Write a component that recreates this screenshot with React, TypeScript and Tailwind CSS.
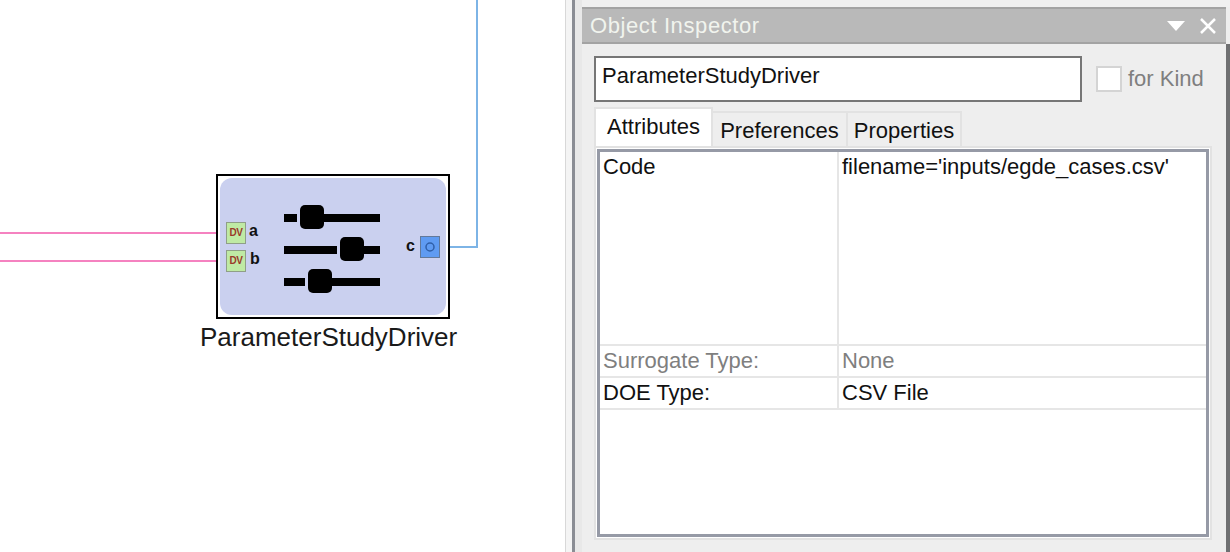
const sans = "font-['Liberation_Sans',Arial,sans-serif]";

function Slider({ left, mid }: { left: number; mid: number }) {
  return null;
}

function SliderIcon() {
  return (
    <svg width="98" height="92" viewBox="0 0 98 92" className="absolute left-[283px] top-[204px]">
      <g fill="#000">
        <rect x="1" y="10" width="13" height="8" />
        <rect x="30" y="10" width="67" height="8" />
        <rect x="17" y="1" width="24" height="24" rx="5" />
        <rect x="1" y="42" width="53" height="8" />
        <rect x="70" y="42" width="27" height="8" />
        <rect x="57" y="33" width="24" height="24" rx="5" />
        <rect x="1" y="74" width="21" height="8" />
        <rect x="38" y="74" width="59" height="8" />
        <rect x="25" y="65" width="24" height="24" rx="5" />
      </g>
    </svg>
  );
}

function DvPort({ top }: { top: string }) {
  return (
    <div className={`absolute left-[226px] ${top} w-[20px] h-[22px] bg-[#bfeaa4] border border-[#8f9f87] flex items-center justify-center`}>
      <span className={`${sans} text-[10px] leading-none font-bold text-[#9a3a2a] tracking-[-0.5px]`}>DV</span>
    </div>
  );
}

function Diagram() {
  return (
    <div className="relative w-[565px] h-[552px] bg-white shrink-0 overflow-hidden">
      <div className="absolute left-0 top-[232px] w-[227px] h-[2px] bg-[#f582c0]" />
      <div className="absolute left-0 top-[260px] w-[227px] h-[2px] bg-[#f582c0]" />
      <div className="absolute left-[476px] top-0 w-[2px] h-[248px] bg-[#7db4e6]" />
      <div className="absolute left-[442px] top-[246px] w-[36px] h-[2px] bg-[#7db4e6]" />
      <svg width="14" height="14" viewBox="0 0 14 14" className="absolute left-[440px] top-[240px]">
        <path d="M9 1 L2 7 L9 13 M2 7 H14" fill="none" stroke="#7db4e6" strokeWidth="1.5" />
      </svg>

      <div className="absolute left-[216px] top-[174px] w-[234px] h-[145px] border-2 border-black bg-white p-[2px]">
        <div className="w-full h-full rounded-[12px] bg-[#cad0ef]" />
      </div>
      <SliderIcon />

      <DvPort top="top-[222px]" />
      <DvPort top="top-[250px]" />
      <span className={`absolute left-[249px] top-[222px] ${sans} text-[16px] leading-[18px] font-bold text-[#111]`}>a</span>
      <span className={`absolute left-[250px] top-[250px] ${sans} text-[16px] leading-[18px] font-bold text-[#111]`}>b</span>
      <span className={`absolute left-[406px] top-[237px] ${sans} text-[16px] leading-[18px] font-bold text-[#111]`}>c</span>
      <div className="absolute left-[420px] top-[236px] w-[20px] h-[22px] bg-[#5f9bf2] border border-[#62799b] flex items-center justify-center">
        <svg width="12" height="12" viewBox="0 0 12 12">
          <circle cx="6" cy="6" r="4" fill="none" stroke="#2f5fa8" strokeWidth="1.5" />
        </svg>
      </div>

      <div className={`absolute left-[200px] top-[321px] ${sans} text-[26px] leading-[32px] text-[#1a1a1a] whitespace-nowrap`}>
        ParameterStudyDriver
      </div>
    </div>
  );
}

function Splitter() {
  return (
    <div className="flex w-[17px] h-full shrink-0 bg-[#e9e9e9]">
      <div className="w-[1px] bg-[#d8d8d8]" />
      <div className="w-[6px] bg-[#f4f4f4]" />
      <div className="w-[3px] bg-[#8a8d94]" />
      <div className="flex-1 bg-[#e8e8e8]" />
    </div>
  );
}

function Row({ label, value, muted, flex }: { label: string; value: string; muted?: boolean; flex?: boolean }) {
  const color = muted ? "text-[#7f7f7f]" : "text-[#111]";
  return (
    <div className={`flex ${flex ? "h-[194px]" : "h-[32px]"} border-b-2 border-[#e6e6e6] text-[22px] leading-[30px] ${color}`}>
      <div className="w-[239px] pl-[3px] border-r-2 border-[#e6e6e6] whitespace-nowrap">{label}</div>
      <div className="flex-1 pl-[3px] whitespace-nowrap">{value}</div>
    </div>
  );
}

function Inspector() {
  return (
    <div className={`flex-1 h-full flex flex-col bg-[#eeeeee] ${sans}`}>
      <div className="h-[7px] bg-[#f0f0f0] shrink-0" />
      <div className="flex items-center h-[37px] shrink-0 mr-[4px] bg-[#b9b9b9] border-y-2 border-[#a3a3a3] pl-[8px] pr-[10px]">
        <span className="text-[22px] leading-none text-[#f1f4ee] tracking-[0.6px]">Object Inspector</span>
        <div className="ml-auto flex items-center gap-[15px]">
          <svg width="18" height="10" viewBox="0 0 18 10">
            <path d="M0 0 H18 L9 10 Z" fill="#fff" />
          </svg>
          <svg width="16" height="16" viewBox="0 0 16 16">
            <path d="M1 1 L15 15 M15 1 L1 15" stroke="#fff" strokeWidth="2.5" />
          </svg>
        </div>
      </div>

      <div className="flex-1 min-h-0 flex flex-col bg-[#eeeeee] border-r-[4px] border-[#6f7072] pl-[12px] pr-[14px] pt-[12px]">
        <div className="flex items-center shrink-0">
          <div className="w-[488px] h-[46px] bg-white border-2 border-[#767676] px-[6px] text-[22px] leading-[36px] text-[#111] whitespace-nowrap">
            ParameterStudyDriver
          </div>
          <div className="ml-[14px] w-[26px] h-[26px] bg-white border-2 border-[#d4d4d4]" />
          <span className="ml-[6px] text-[22px] leading-none text-[#7f7f7f]">for Kind</span>
        </div>

        <div className="flex items-end h-[40px] mt-[5px] shrink-0 text-[22px] text-[#111]">
          <div className="w-[119px] h-[40px] bg-white border-2 border-b-0 border-[#e2e2e2] text-center leading-[36px]">Attributes</div>
          <div className="w-[135px] h-[36px] bg-[#eeeeee] border-2 border-b-0 border-l-0 border-[#e2e2e2] text-center leading-[36px]">Preferences</div>
          <div className="w-[114px] h-[36px] bg-[#eeeeee] border-2 border-b-0 border-l-0 border-[#e2e2e2] text-center leading-[36px]">Properties</div>
        </div>

        <div className="flex-1 min-h-0 mb-[12px] bg-white border-2 border-[#e2e2e2] p-[1px] -mt-[1px]">
          <div className="h-full border-[3px] border-[#969aa6] bg-white pl-[0px] pr-[0px]">
            <Row label="Code" value="filename='inputs/egde_cases.csv'" flex />
            <Row label="Surrogate Type:" value="None" muted />
            <Row label="DOE Type:" value="CSV File" />
          </div>
        </div>
      </div>
    </div>
  );
}

export default function App() {
  return (
    <div className="flex w-[1230px] h-[552px] overflow-hidden bg-white">
      <Diagram />
      <Splitter />
      <Inspector />
    </div>
  );
}
